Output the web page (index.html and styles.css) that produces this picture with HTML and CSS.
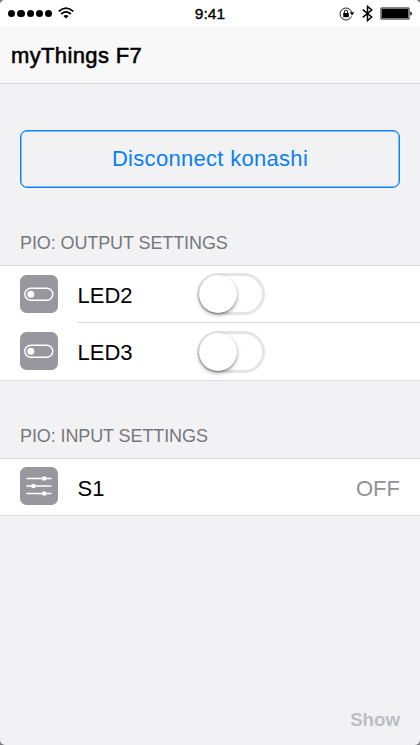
FILE: index.html
```html
<!DOCTYPE html>
<html lang="en">
<head>
<meta charset="utf-8">
<title>myThings F7</title>
<link rel="stylesheet" href="styles.css">
</head>
<body>
<div class="screen">
  <div class="status">
    <div class="signal">
      <i></i><i></i><i></i><i></i><i></i>
      <svg class="wifi" width="16" height="12" viewBox="0 0 16 12" fill="none" stroke="#000" stroke-width="1.7"><path d="M.7 4.3Q8-2.2 15.3 4.3M3.2 7Q8 2.7 12.8 7"/><path d="M8 11.5 5.4 8.9Q8 6.9 10.6 8.9Z" fill="#000" stroke="none"/></svg>
    </div>
    <div class="time">9:41</div>
    <div class="indicators">
      <svg width="16" height="14" viewBox="0 0 16 14" fill="none" stroke="#222"><path d="M12.7 5A6 6 0 1 0 12.5 9.5"/><path d="M10.7 5.3h4.6L13 8.4Z" fill="#000" stroke="none"/><rect x="4.2" y="6" width="5.6" height="4.2" fill="#000" stroke="none"/><path d="M5.4 6V4.9a1.6 1.6 0 0 1 3.2 0V6" stroke-width="1.1"/></svg>
      <svg width="11" height="17" viewBox="0 0 11 17" fill="none" stroke="#000" stroke-width="1.5"><path d="M.8 4.6 9.7 12 5.5 15.6V1.4L9.7 5 .8 12.4"/></svg>
      <svg width="32" height="13" viewBox="0 0 32 13"><rect x=".5" y=".5" width="29" height="12" rx="1.5" fill="#000" stroke="#888"/><rect x="1.5" y="1.5" width="27" height="10" rx=".5" fill="none" stroke="#aaa" stroke-width=".7"/><path d="M30.2 4.5q1.8 0 1.8 2t-1.8 2Z" fill="#222"/></svg>
    </div>
  </div>
  <header class="nav">myThings F7</header>
  <main>
    <button class="disconnect">Disconnect konashi</button>
    <h2 class="heading">PIO: OUTPUT SETTINGS</h2>
    <section class="group">
      <div class="row">
        <svg class="icon" viewBox="0 0 38 38"><rect width="38" height="38" rx="6.5"/><rect x="4.8" y="13.2" width="28" height="12" rx="6" class="line"/><circle cx="10.8" cy="19.2" r="3.5" class="dot"/></svg>
        <div class="cell divided"><span class="label">LED2</span><span class="switch"><b></b></span></div>
      </div>
      <div class="row">
        <svg class="icon" viewBox="0 0 38 38"><rect width="38" height="38" rx="6.5"/><rect x="4.8" y="13.2" width="28" height="12" rx="6" class="line"/><circle cx="10.8" cy="19.2" r="3.5" class="dot"/></svg>
        <div class="cell"><span class="label">LED3</span><span class="switch"><b></b></span></div>
      </div>
    </section>
    <h2 class="heading">PIO: INPUT SETTINGS</h2>
    <section class="group">
      <div class="row single">
        <svg class="icon" viewBox="0 0 38 38"><rect width="38" height="38" rx="6.5"/><path class="line bars" d="M6.3 11.5h25.2M6.3 19h25.2M6.3 26.5h25.2"/><g class="dot"><circle cx="24.3" cy="11.5" r="2.3"/><circle cx="13.5" cy="19" r="2.3"/><circle cx="24.3" cy="26.5" r="2.3"/></g></svg>
        <div class="cell"><span class="label">S1</span><span class="value">OFF</span></div>
      </div>
    </section>
  </main>
  <footer class="toolbar">Show</footer>
</div>
</body>
</html>
```
FILE: styles.css
```css
* { box-sizing: border-box; }
body {
  margin: 0;
  background: #777;
  font-family: "Liberation Sans", Arial, sans-serif;
  color: #000;
}
.screen {
  width: 420px;
  height: 745px;
  border-radius: 5px;
  overflow: hidden;
  background: #f2f2f5;
  display: flex;
  flex-direction: column;
}
.status {
  height: 26px;
  background: #fff;
  display: grid;
  grid-template-columns: 1fr auto 1fr;
  align-items: center;
  padding: 1px 8px 0;
}
.signal { display: flex; align-items: center; gap: 2px; }
.signal i { width: 7.3px; height: 7.3px; border-radius: 50%; background: #000; }
.wifi { margin-left: 3.5px; margin-top: -2px; }
.time { font-size: 15.5px; line-height: 24px; letter-spacing: .1px; -webkit-text-stroke: .4px #000; }
.indicators { display: flex; align-items: center; justify-content: flex-end; gap: 7px; }
.nav {
  height: 58px;
  padding-left: 11px;
  background: #f8f8f8;
  border-bottom: 1px solid #d5d5d7;
  font-size: 22px;
  line-height: 60px;
  letter-spacing: .36px;
  -webkit-text-stroke: .55px #000;
}
main { flex: 1; padding-top: 46px; }
.disconnect {
  display: block;
  width: 380px;
  height: 57.5px;
  margin: 0 0 .5px 20px;
  padding: 0;
  border: 1px solid #0a84ff;
  box-shadow: inset 0 0 0 .5px #0a84ff;
  border-radius: 7px;
  background: none;
  color: #0a80f5;
  font: 22px/56px "Liberation Sans", Arial, sans-serif;
  letter-spacing: .3px;
}
.heading {
  margin: 0;
  height: 77px;
  padding: 44px 0 0 20px;
  font-size: 18px;
  line-height: 22px;
  font-weight: 400;
  letter-spacing: -.1px;
  color: #77777b;
}
.group { background: #fff; border: solid #dcdcdf; border-width: 1px 0; }
.row { display: flex; align-items: center; height: 57px; padding-left: 20px; }
.row.single { height: 56px; }
.icon { width: 38px; height: 38px; margin-top: -2px; flex: none; fill: #98979d; }
.icon .line { fill: none; stroke: #fff; stroke-width: 1.4; }
.icon .bars { stroke-width: 1.7; }
.icon .dot { fill: #fff; }
.cell { flex: 1; height: 57px; margin-left: 20px; padding-right: 20px; display: flex; align-items: center; }
.divided { border-bottom: 1px solid #d9d9dc; }
.label { width: 119px; font-size: 22px; line-height: 30px; padding-top: 3px; margin-left: -.5px; }
.switch { width: 68px; height: 42px; border: 3px solid #e5e5e5; border-radius: 21px; margin-left: .5px; }
.switch b { display: block; width: 38px; height: 38px; margin: -1px 0 0 -1px; border-radius: 50%; background: #fff; box-shadow: 0 2px 4px rgba(0,0,0,.35), 0 1px 1px rgba(0,0,0,.25); }
.value { margin-left: auto; padding-top: 3px; font-size: 22px; line-height: 30px; color: #919196; }
.toolbar { height: 52px; padding: 15px 20px 0 0; text-align: right; font-size: 18.7px; line-height: 24px; font-weight: 700; color: #bdbdc0; }
```
